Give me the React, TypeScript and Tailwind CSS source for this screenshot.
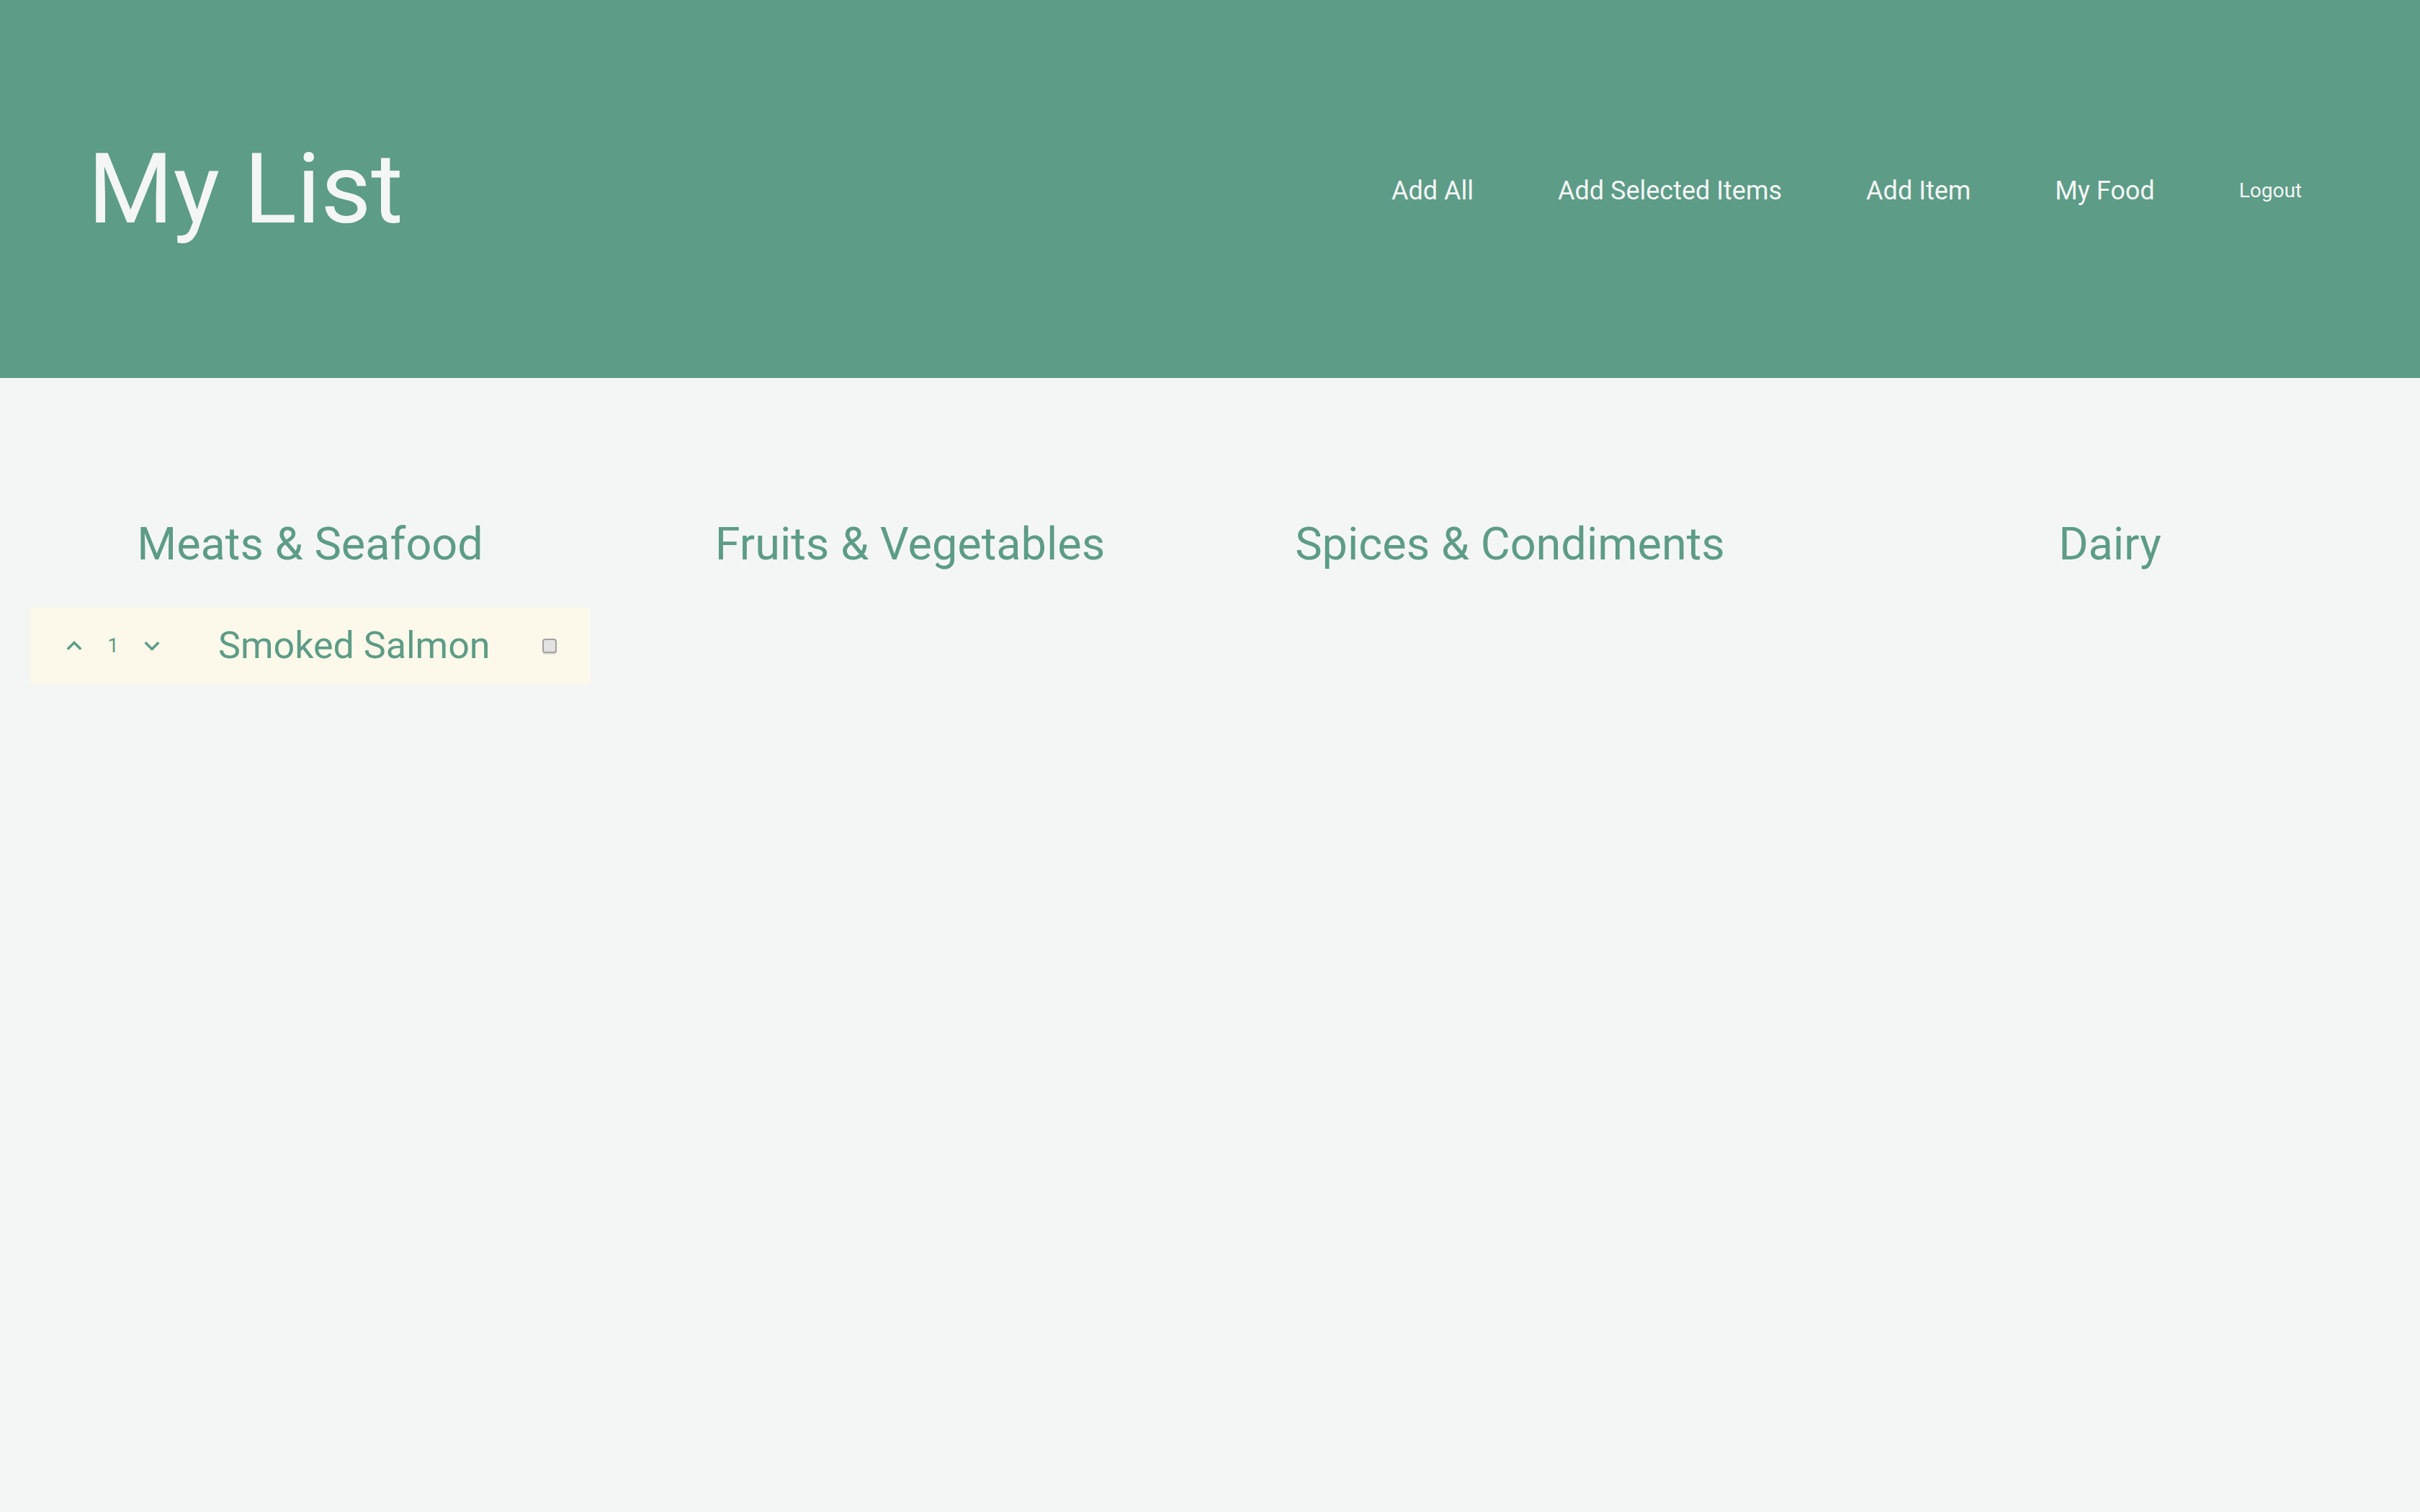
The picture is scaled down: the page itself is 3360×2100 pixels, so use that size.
import React from "react";

function ArrowUp() {
  return (
    <svg width="42" height="42" viewBox="0 0 24 24" fill="#5d9c87">
      <path d="M7.41 15.41L12 10.83l4.59 4.58L18 14l-6-6-6 6z" />
    </svg>
  );
}

function ArrowDown() {
  return (
    <svg width="42" height="42" viewBox="0 0 24 24" fill="#5d9c87">
      <path d="M7.41 8.59L12 13.17l4.59-4.58L18 10l-6 6-6-6 1.41-1.41z" />
    </svg>
  );
}

function ItemCard({ qty, name }: { qty: number; name: string }) {
  return (
    <div className="mx-[28px] flex h-[106px] items-center bg-[#fcf9ea] pl-[40px] pr-[46px]">
      <button className="flex h-[42px] w-[42px] items-center justify-center">
        <ArrowUp />
      </button>
      <span className="ml-[25px] w-[16px] text-center text-[28px] leading-none text-[#5d9c87]">{qty}</span>
      <button className="ml-[25px] flex h-[42px] w-[42px] items-center justify-center">
        <ArrowDown />
      </button>
      <span className="ml-[71px] flex-1 whitespace-nowrap text-[52px] leading-none text-[#5d9c87]">{name}</span>
      <span className="h-[20px] w-[20px] rounded-[4px] border-2 border-[#a3a3a3] bg-[#e2e2e2] shadow-[0_2px_1px_rgba(0,0,0,0.12)]" />
    </div>
  );
}

export default function App() {
  const cols: { title: string; items: { qty: number; name: string }[] }[] = [
    { title: "Meats & Seafood", items: [{ qty: 1, name: "Smoked Salmon" }] },
    { title: "Fruits & Vegetables", items: [] },
    { title: "Spices & Condiments", items: [] },
    { title: "Dairy", items: [] },
  ];
  const nav = ["Add All", "Add Selected Items", "Add Item", "My Food"];
  return (
    <div
      className="min-h-[2100px] w-full bg-[#f4f6f5]"
      style={{ fontFamily: "Roboto, 'Noto Sans', sans-serif" }}
    >
      <header className="flex h-[525px] items-center justify-between bg-[#5d9c87] pl-[122px] pr-[164px]">
        <h1 className="text-[136px] font-normal leading-none text-[#f4f6f5]">My List</h1>
        <nav className="mt-[4px] flex items-center gap-[117px] text-[#f4f6f5]">
          {nav.map((n) => (
            <a key={n} className="text-[36px] leading-none">
              {n}
            </a>
          ))}
          <a className="text-[28px] leading-none">Logout</a>
        </nav>
      </header>
      <main className="grid grid-cols-4 px-[14px] pt-[199px]">
        {cols.map((c) => (
          <section key={c.title} className="flex flex-col">
            <h2 className="text-center text-[63px] font-normal leading-none text-[#5d9c87]">{c.title}</h2>
            <div className="mt-[57px] flex flex-col gap-4">
              {c.items.map((it) => (
                <ItemCard key={it.name} qty={it.qty} name={it.name} />
              ))}
            </div>
          </section>
        ))}
      </main>
    </div>
  );
}
